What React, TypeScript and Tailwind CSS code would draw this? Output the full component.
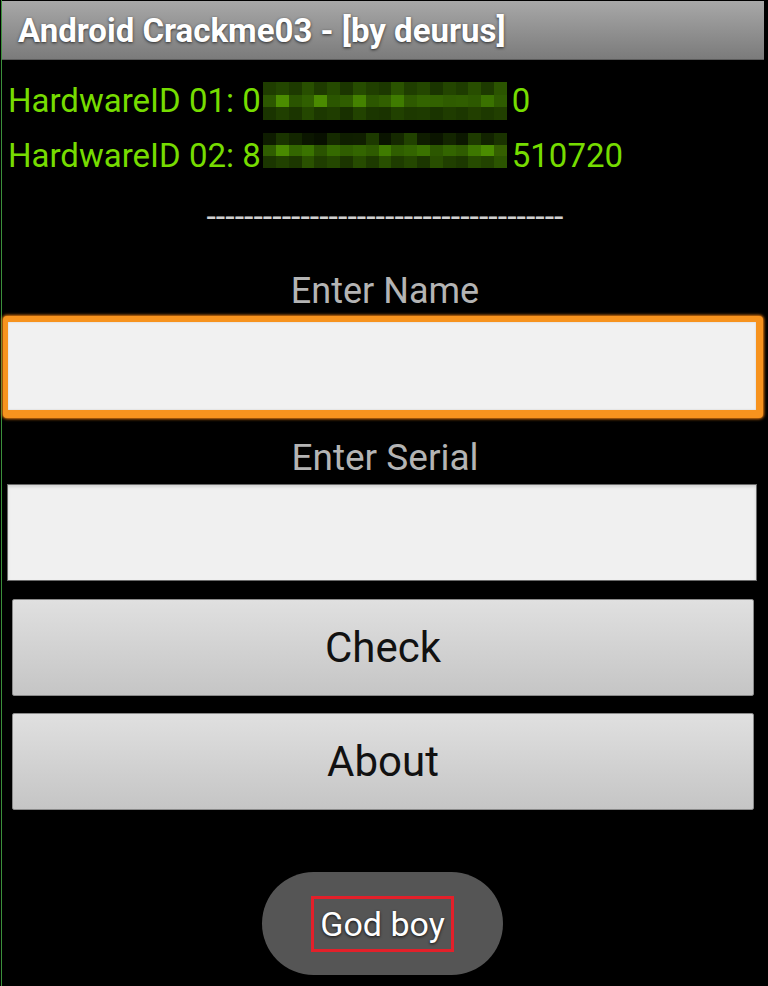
import React from "react";

// pixelated (blurred) parts of the hardware ids
const block1 = [
  ["#1f3d00", "#234600", "#1d3a00", "#284f00", "#1e3b00", "#254a00", "#1b3600", "#264c00", "#203f00", "#1c3800", "#2a5300", "#1f3e00", "#244700", "#1a3500", "#234500", "#1e3c00", "#284e00", "#1d3a00", "#2b5400"],
  ["#2c5700", "#4b8d00", "#2a5400", "#305f00", "#4a8b00", "#2b5600", "#2f5d00", "#448200", "#2c5700", "#315f00", "#3f7c00", "#2e5a00", "#336400", "#326200", "#2f5c00", "#305e00", "#2d5900", "#3a7200", "#2e5b00"],
  ["#1a3400", "#203f00", "#1b3500", "#244700", "#1c3800", "#1f3d00", "#183000", "#224300", "#1b3600", "#1a3300", "#214100", "#1d3900", "#1e3b00", "#1a3400", "#1f3c00", "#1c3700", "#223f00", "#1d3900", "#213f00"],
];

const block2 = [
  ["#0e1c00", "#1a3400", "#132600", "#0b1600", "#081000", "#152a00", "#0f1e00", "#101f00", "#1d3a00", "#0a1400", "#152900", "#214200", "#0f1d00", "#0b1500", "#132500", "#0c1800", "#1e3b00", "#122300", "#1a3300"],
  ["#2f5d00", "#498a00", "#336600", "#3a7300", "#2a5300", "#356a00", "#2f5d00", "#336500", "#2e5b00", "#3f7b00", "#2f5e00", "#336500", "#3a7200", "#2c5700", "#336500", "#2f5c00", "#3d7700", "#4a8c00", "#345f00"],
  ["#1b3600", "#214100", "#1c3700", "#2a5200", "#1f3d00", "#244700", "#1b3500", "#264b00", "#1d3a00", "#284f00", "#1e3c00", "#244700", "#1b3600", "#284e00", "#203f00", "#1c3800", "#264b00", "#224300", "#2b5400"],
];

const Mosaic = ({ cells, w, h }: { cells: string[][]; w: number; h: number }) => {
  const cw = w / cells[0].length;
  const ch = h / cells.length;
  return (
    <svg width={w} height={h} viewBox={`0 0 ${w} ${h}`} className="shrink-0" shapeRendering="crispEdges">
      {cells.map((row, r) =>
        row.map((c, i) => (
          <rect key={`${r}-${i}`} x={i * cw} y={r * ch} width={cw + 0.5} height={ch + 0.5} fill={c} />
        ))
      )}
    </svg>
  );
};

export default function App() {
  return (
    <div className="h-[986px] w-[768px] bg-black pl-px font-['Roboto',sans-serif] overflow-hidden">
      <div className="flex h-full flex-col border-l border-[#3b8f3b] pt-px">
        {/* Title bar */}
        <div className="mr-[4px] flex h-[59px] shrink-0 items-center border-b border-[#5c5c5c] bg-gradient-to-b from-[#a8a8a8] to-[#7b7b7b] pl-[16px]">
          <span className="text-[33px] font-bold leading-[33px] text-white [text-shadow:0_1px_3px_rgba(0,0,0,0.7)]">
            Android Crackme03 - [by deurus]
          </span>
        </div>

        {/* Hardware ids */}
        <div className="mt-[13px] flex flex-col pl-[6px] text-[33px] leading-[33px] text-[#76dc00]">
          <div className="flex h-[55px] items-center">
            <span>HardwareID 01: 0</span>
            <div className="ml-[2px] mr-[5px]">
              <Mosaic cells={block1} w={244} h={38} />
            </div>
            <span>0</span>
          </div>
          <div className="flex h-[55px] items-center">
            <span>HardwareID 02: 8</span>
            <div className="mb-[10px] ml-[2px] mr-[5px]">
              <Mosaic cells={block2} w={244} h={35} />
            </div>
            <span>510720</span>
          </div>
        </div>

        <div className="mt-[16px] flex h-[34px] justify-center text-[34px] leading-[34px] text-[#d0d0d0]">
          --------------------------------------
        </div>

        <div className="mt-[40px] h-[36px] text-center text-[36px] leading-[36px] text-[#b4b4b4]">
          Enter Name
        </div>

        <div className="ml-px mt-[7px] h-[102px] w-[760px] rounded-[4px] bg-[#f7931e] pb-[8px] pl-[5px] pr-[7px] pt-[6px] shadow-[0_0_3px_1px_#f08010]">
          <input
            readOnly
            className="h-full w-full bg-[#f1f1f1] outline-none shadow-[inset_0_0_2px_rgba(0,0,0,0.15)]"
          />
        </div>

        <div className="mt-[21px] h-[37px] text-center text-[37px] leading-[37px] text-[#b4b4b4]">
          Enter Serial
        </div>

        <input
          readOnly
          className="ml-[5px] mt-[8px] h-[97px] w-[750px] shrink-0 border border-[#6a6a6a] bg-[#f0f0f0] outline-none shadow-[inset_0_2px_3px_rgba(0,0,0,0.12)]"
        />

        <button className="ml-[10px] mt-[18px] flex h-[97px] w-[742px] shrink-0 items-center justify-center rounded-[2px] border border-[#8a8a8a] bg-gradient-to-b from-[#e0e0e0] to-[#c5c5c5] text-[42px] leading-[42px] text-[#111]">
          Check
        </button>
        <button className="ml-[10px] mt-[17px] flex h-[97px] w-[742px] shrink-0 items-center justify-center rounded-[2px] border border-[#8a8a8a] bg-gradient-to-b from-[#e0e0e0] to-[#c5c5c5] text-[42px] leading-[42px] text-[#111]">
          About
        </button>

        {/* Toast */}
        <div className="ml-[260px] mt-[62px] flex h-[103px] w-[241px] shrink-0 items-center justify-center rounded-full bg-[#555555]">
          <div className="flex h-[56px] w-[143px] items-center justify-center border-[3px] border-[#e3202a]">
            <span className="text-[34px] leading-[34px] text-white [text-shadow:0_1px_3px_rgba(0,0,0,0.8)]">
              God boy
            </span>
          </div>
        </div>
      </div>
    </div>
  );
}
